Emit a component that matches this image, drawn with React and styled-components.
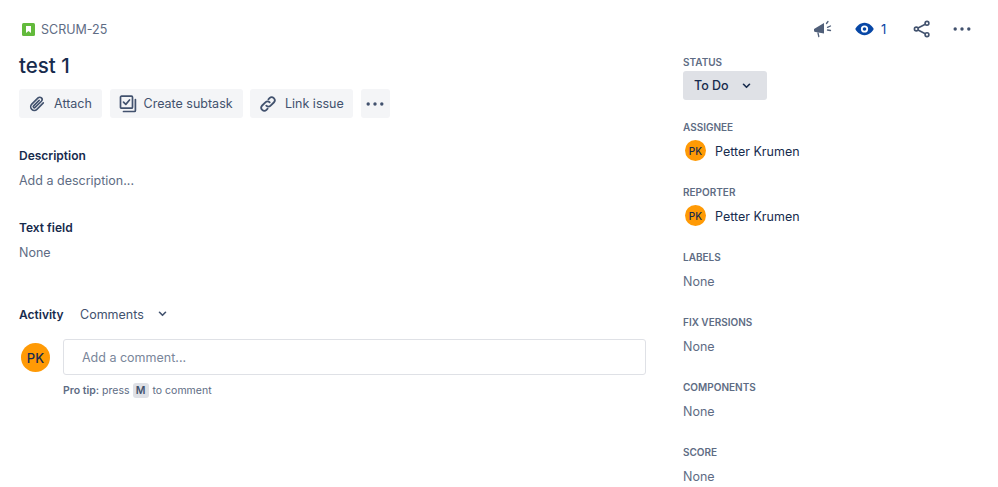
import React from "react";
import styled, { createGlobalStyle } from "styled-components";

const Global = createGlobalStyle`
  html, body { margin: 0; padding: 0; background: #fff; }
  body { font-family: Inter, "Noto Sans", "Liberation Sans", sans-serif; color: #172b4d; -webkit-font-smoothing: antialiased; }
`;

const Page = styled.div`
  width: 998px; height: 487px; overflow: hidden;
  display: grid; grid-template-columns: 683px 1fr;
  box-sizing: border-box; position: relative;
`;
const Main = styled.main`
  padding: 19px 37px 0 19px; display: flex; flex-direction: column; min-width: 0;
`;
const Crumb = styled.div`
  display: flex; align-items: center; gap: 6px; height: 20px; padding-left: 3px;
  font-size: 12.5px; color: #5e6c84;
`;
const Title = styled.h1`
  margin: 11px 0 0; font-size: 20.5px; line-height: 32px; font-weight: 500; color: #172b4d;
`;
const Actions = styled.div`
  display: flex; gap: 7.5px; margin-top: 7px; height: 29px;
`;
const Action = styled.button`
  display: flex; align-items: center; gap: ${p => p.$gap ?? 8}px; height: 29px; box-sizing: border-box;
  width: ${p => p.$w}px; padding: 0 0 0 ${p => p.$pad ?? 9}px; border: 0; border-radius: 3px; background: #f4f5f7;
  font: 400 12.5px Inter, sans-serif; color: #42526e;
`;
const Heading = styled.h2`
  margin: ${p => p.$mt}px 0 0; font-size: 12px; line-height: 18px; font-weight: 600; color: #172b4d;
`;
const Body = styled.div`
  margin-top: 7px; font-size: 12.5px; line-height: 18px; color: #5e6c84;
`;
const ActivityRow = styled.div`
  display: flex; align-items: center; margin-top: 43px; height: 18px;
`;
const ActivityLabel = styled.span`
  font-size: 12px; font-weight: 600; color: #172b4d; width: 61px;
`;
const Filter = styled.span`
  display: flex; align-items: center; gap: 14px; font-size: 12.5px; color: #42526e;
`;
const CommentRow = styled.div`
  display: flex; align-items: flex-start; margin-top: 16px;
`;
const Avatar = styled.div`
  width: ${p => p.$s}px; height: ${p => p.$s}px; border-radius: 50%; background: #ff9a05; flex: none;
  display: flex; align-items: center; justify-content: center;
  font-size: ${p => p.$f}px; font-weight: 500; color: #172b4d;
`;
const CommentSlot = styled.div`
  width: 29px; margin: 4px 13px 0 2px; flex: none;
`;
const CommentCol = styled.div`flex: 1; min-width: 0;`;
const CommentBox = styled.div`
  height: 36px; box-sizing: border-box; border: 1px solid #dfe1e6; border-radius: 3px;
  display: flex; align-items: center; padding-left: 18px; font-size: 12.5px; color: #7a869a;
`;
const Tip = styled.div`
  display: flex; align-items: center; gap: 3px; margin-top: 6px; height: 18px; font-size: 10.5px; color: #5e6c84;
  b { font-weight: 600; }
`;
const Key = styled.span`
  display: inline-flex; align-items: center; justify-content: center; width: 16px; height: 15px; border-radius: 3px;
  background: #dfe1e6; font-size: 10.5px; font-weight: 600; color: #42526e; margin: 0 1px 0 0;
`;
const Side = styled.aside`
  padding-top: 19px; display: flex; flex-direction: column; position: relative;
`;
const TopIcons = styled.div`
  height: 20px; display: flex; align-items: center; position: relative;
`;
const TopSlot = styled.span`
  display: flex; align-items: center; justify-content: center; position: absolute; left: ${p => p.$x}px;
  font-size: 13px; color: #0747a6;
`;
const FieldLabel = styled.div`
  font-size: 10px; line-height: 14px; height: 14px; font-weight: 600; color: #5e6c84; margin-top: ${p => p.$mt}px;
`;
const StatusBtn = styled.button`
  display: flex; align-items: center; gap: 13px; width: 84px; height: 29px; margin-top: 2px; padding: 0 0 0 11px; box-sizing: border-box;
  border: 0; border-radius: 3px; background: #dfe1e6; font: 500 12.5px Inter, sans-serif; color: #172b4d;
`;
const Person = styled.div`
  display: flex; align-items: center; gap: 9px; margin: 6px 0 0 2px; height: 21px; font-size: 12.5px; color: #172b4d;
`;
const PersonName = styled.span`
  padding-top: 2px;
`;
const FieldValue = styled.div`
  margin-top: 9px; height: 18px; line-height: 18px; font-size: 12.5px; color: #5e6c84;
`;

const Chevron = ({ c = "#172b4d" }) => (
  <svg width="9" height="6" viewBox="0 0 10 7"><path d="M1.5 1.5 5 5l3.5-3.5" fill="none" stroke={c} strokeWidth="1.9" strokeLinecap="round" strokeLinejoin="round" /></svg>
);
const Dots = ({ c = "#42526e" }) => (
  <svg width="18" height="4" viewBox="0 0 18 4"><circle cx="2.2" cy="2" r="1.7" fill={c} /><circle cx="9" cy="2" r="1.7" fill={c} /><circle cx="15.8" cy="2" r="1.7" fill={c} /></svg>
);
const Story = () => (
  <svg width="13" height="13" viewBox="0 0 13 13"><rect width="13" height="13" rx="1.5" fill="#63ba3c" /><path d="M4 3h5v7L6.5 8 4 10z" fill="#fff" /></svg>
);
const Clip = () => (
  <svg width="18" height="18" viewBox="0 0 20 20" fill="none" stroke="#42526e" strokeWidth="1.8" strokeLinecap="round" strokeLinejoin="round"><path d="M17 8.8 9.900 15.900a4 4 0 0 1-5.700-5.700l7-7a2.600 2.600 0 0 1 3.700 3.700l-7 6.900a1.200 1.200 0 0 1-1.700-1.700L12.400 6" /></svg>
);
const Subtask = () => (
  <svg width="18" height="18" viewBox="0 0 18 18" fill="none" stroke="#42526e" strokeWidth="1.7" strokeLinejoin="round" strokeLinecap="round"><rect x="1.5" y="1.2" width="12" height="12" rx="1" /><path d="M4.5 7.2 6.800 9.400 10.500 5" /><path d="M16.400 4.500v11a1 1 0 0 1-1 1H4.500" /></svg>
);
const LinkIcon = () => (
  <svg width="18" height="18" viewBox="0 0 18 18" fill="none" stroke="#42526e" strokeWidth="1.8" strokeLinecap="round"><path d="M7.300 10.700a3 3 0 0 0 4.300 0l3.200-3.200a3 3 0 0 0-4.300-4.300L9.400 4.300" /><path d="M10.700 7.300a3 3 0 0 0-4.300 0L3.200 10.500a3 3 0 0 0 4.300 4.300l1.100-1.100" /></svg>
);
const Megaphone = () => (
  <svg width="20" height="20" viewBox="0 0 20 20"><path d="M1 10 11 4v10.500L2.500 13a1.500 1.500 0 0 1-1.500-1.500z" fill="#505f79" /><path d="M5 14 5.800 17.500" stroke="#505f79" strokeWidth="1.300" strokeLinecap="round" /><path d="M13.500 4.500 15 2.500M14.500 8.300l3-1.300M14.500 11l3 .5" stroke="#505f79" strokeWidth="1.300" strokeLinecap="round" fill="none" /></svg>
);
const Eye = () => (
  <svg width="19" height="14" viewBox="0 0 20 14"><path d="M10 .5C15 .5 18.500 4.600 19.700 7 18.500 9.400 15 13.500 10 13.500S1.500 9.400.3 7C1.500 4.600 5 .5 10 .5z" fill="#0747a6" /><circle cx="10" cy="7" r="3.800" fill="#fff" /><circle cx="10" cy="7" r="1.900" fill="#0747a6" /></svg>
);
const Share = () => (
  <svg width="18" height="18" viewBox="0 0 18 18" fill="none" stroke="#42526e" strokeWidth="1.600"><circle cx="14" cy="3.300" r="1.900" /><circle cx="14" cy="14.700" r="1.900" /><circle cx="3.300" cy="9" r="1.900" /><path d="M5 8 12.300 4.300M5 10l7.300 3.700" /></svg>
);

const fields = ["LABELS", "FIX VERSIONS", "COMPONENTS", "SCORE"];

export default function App() {
  return (
    <Page>
      <Global />
      <Main>
        <Crumb><Story />SCRUM-25</Crumb>
        <Title>test 1</Title>
        <Actions>
          <Action $w={83}><Clip />Attach</Action>
          <Action $w={133} $gap={7}><Subtask />Create subtask</Action>
          <Action $w={103}><LinkIcon />Link issue</Action>
          <Action $w={29} $pad={5.5}><Dots /></Action>
        </Actions>
        <Heading $mt={29}>Description</Heading>
        <Body>Add a description...</Body>
        <Heading $mt={29}>Text field</Heading>
        <Body>None</Body>
        <ActivityRow>
          <ActivityLabel>Activity</ActivityLabel>
          <Filter>Comments <Chevron c="#42526e" /></Filter>
        </ActivityRow>
        <CommentRow>
          <CommentSlot><Avatar $s={29} $f={13}>PK</Avatar></CommentSlot>
          <CommentCol>
            <CommentBox>Add a comment...</CommentBox>
            <Tip><b>Pro tip:</b> press <Key>M</Key> to comment</Tip>
          </CommentCol>
        </CommentRow>
      </Main>
      <Side>
        <TopIcons>
          <TopSlot $x={130}><Megaphone /></TopSlot>
          <TopSlot $x={172}><Eye /></TopSlot>
          <TopSlot $x={198}>1</TopSlot>
          <TopSlot $x={230}><Share /></TopSlot>
          <TopSlot $x={270}><Dots /></TopSlot>
        </TopIcons>
        <FieldLabel $mt={16}>STATUS</FieldLabel>
        <StatusBtn>To Do <Chevron /></StatusBtn>
        <FieldLabel $mt={20}>ASSIGNEE</FieldLabel>
        <Person><Avatar $s={21} $f={10}>PK</Avatar><PersonName>Petter Krumen</PersonName></Person>
        <FieldLabel $mt={24}>REPORTER</FieldLabel>
        <Person><Avatar $s={21} $f={10}>PK</Avatar><PersonName>Petter Krumen</PersonName></Person>
        {fields.map(l => (
          <React.Fragment key={l}>
            <FieldLabel $mt={24}>{l}</FieldLabel>
            <FieldValue>None</FieldValue>
          </React.Fragment>
        ))}
      </Side>
    </Page>
  );
}
